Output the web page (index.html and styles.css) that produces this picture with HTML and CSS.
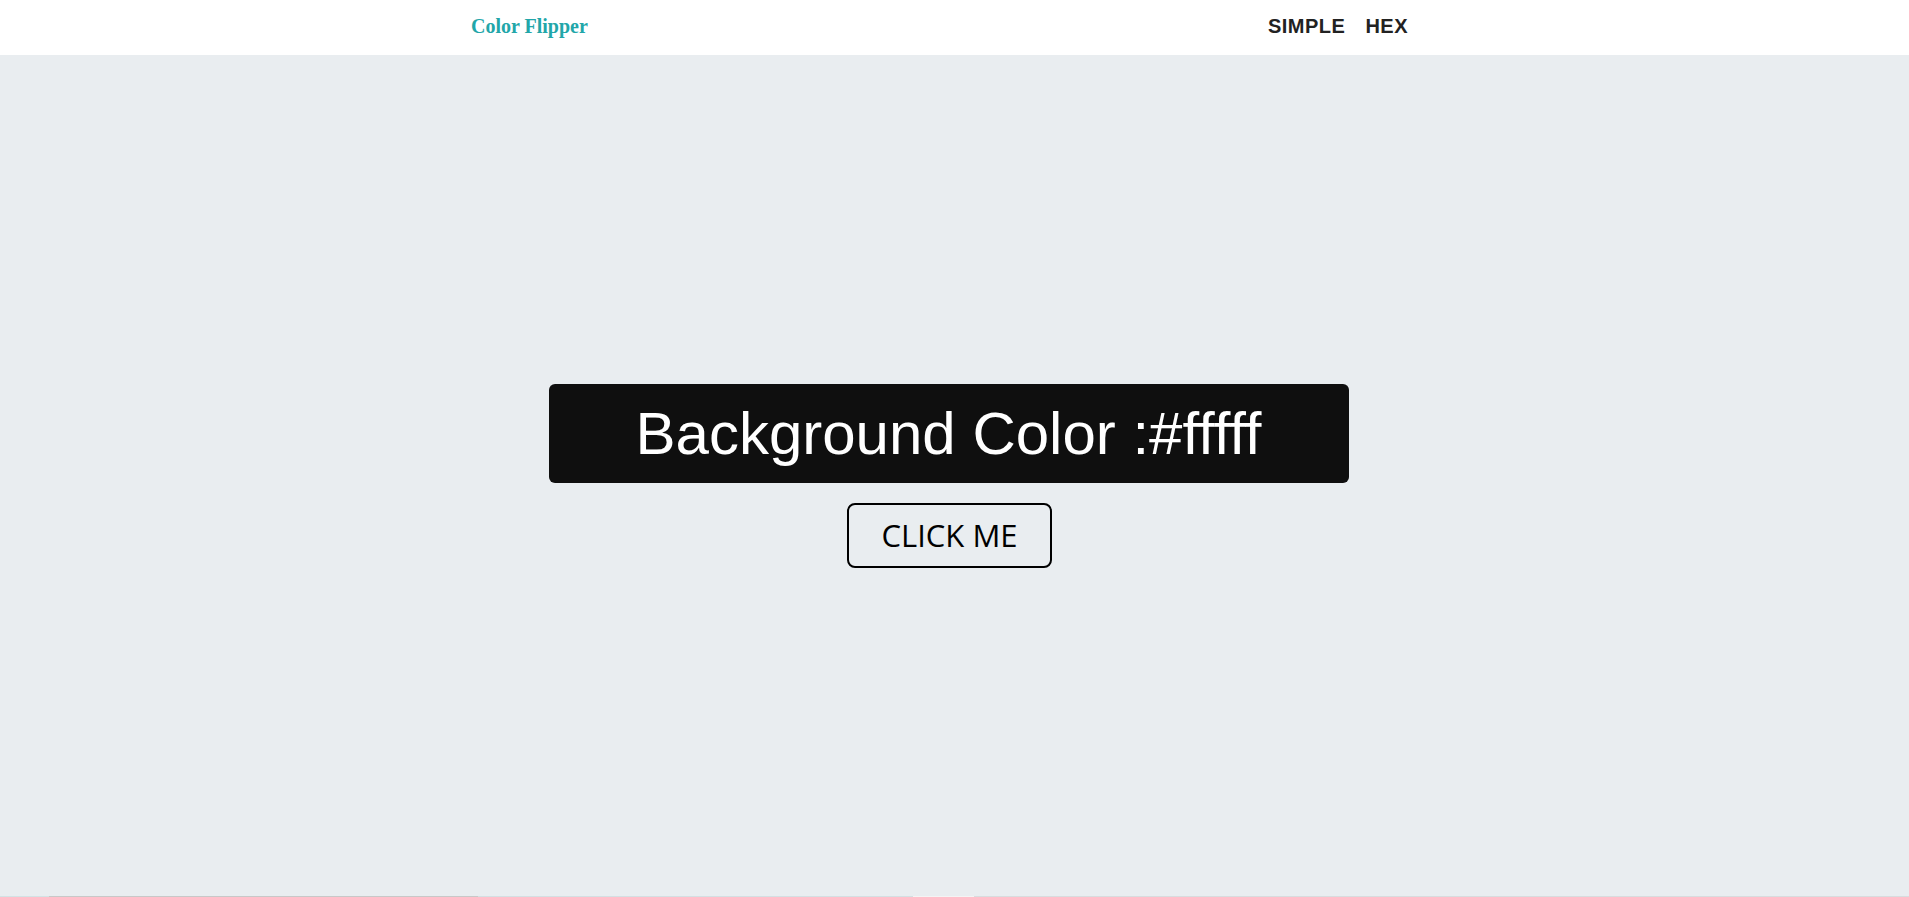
FILE: index.html
```html
<!DOCTYPE html>
<html lang="en">
<head>
<meta charset="UTF-8">
<title>Color Flipper</title>
<link rel="stylesheet" href="styles.css">
</head>
<body>
<nav class="navbar">
  <div class="nav-center">
    <h4 class="brand">Color Flipper</h4>
    <ul class="nav-links">
      <li><a href="#">SIMPLE</a></li>
      <li><a href="#">HEX</a></li>
    </ul>
  </div>
</nav>
<main class="main">
  <div class="container">
    <h2 class="color-box">Background Color :#fffff</h2>
    <button class="btn">CLICK ME</button>
  </div>
</main>
<div class="strip">
  <span class="s1"></span><span class="s2"></span><span class="s3"></span><span class="s4"></span><span class="s5"></span>
</div>
</body>
</html>
```
FILE: styles.css
```css
* { box-sizing: border-box; }
html, body { margin: 0; padding: 0; }
body {
  height: 100vh;
  display: flex;
  flex-direction: column;
  background: #e9edf0;
  overflow: hidden;
}
.navbar {
  height: 55px;
  background: #ffffff;
  flex-shrink: 0;
}
.nav-center {
  width: 965px;
  margin: 0 auto;
  height: 100%;
  padding: 0 0 3px 0;
  display: flex;
  align-items: center;
  justify-content: space-between;
}
.brand {
  margin: 0 0 0 -1px;
  font-family: "Liberation Serif", serif;
  font-weight: bold;
  font-size: 20px;
  color: #22a6a9;
}
.nav-links {
  list-style: none;
  margin: 0;
  padding: 0 29px 0 0;
  display: flex;
  gap: 20px;
}
.nav-links a {
  text-decoration: none;
  font-family: "Liberation Sans", Arial, sans-serif;
  font-weight: bold;
  font-size: 20px;
  letter-spacing: 0.5px;
  color: #222222;
}
.main {
  flex: 1;
  display: flex;
  align-items: center;
  justify-content: center;
  padding-right: 12px;
}
.container {
  display: flex;
  flex-direction: column;
  align-items: center;
  gap: 20px;
}
.color-box {
  margin: 0;
  width: 800px;
  height: 99px;
  display: flex;
  align-items: center;
  justify-content: center;
  background: #0f0f0f;
  color: #ffffff;
  border-radius: 6px;
  font-family: "Liberation Sans", Arial, sans-serif;
  font-weight: normal;
  font-size: 60px;
}
.btn {
  width: 205px;
  height: 65px;
  margin-left: 2px;
  background: transparent;
  border: 2px solid #000000;
  border-radius: 8px;
  font-family: "Open Sans", sans-serif;
  font-size: 31px;
  color: #000000;
  padding: 0;
  cursor: pointer;
}
.strip {
  height: 1px;
  flex-shrink: 0;
  display: flex;
}
.strip span { height: 1px; }
.s1 { width: 49px; background: #d3e2e4; }
.s2 { width: 429px; background: #c8c8c8; }
.s3 { width: 435px; background: #d4dfe2; }
.s4 { width: 61px; background: #f4f4f4; }
.s5 { flex: 1; background: #d8dcde; }
```
